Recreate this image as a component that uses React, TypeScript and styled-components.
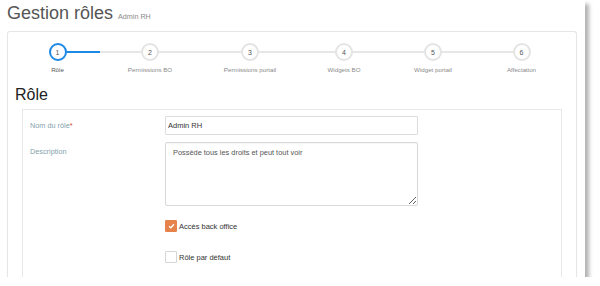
import React from "react";
import styled, { createGlobalStyle, css } from "styled-components";

const GlobalStyle = createGlobalStyle`
  html, body {
    margin: 0;
    padding: 0;
    background: #ffffff;
  }
  body {
    font-family: "Liberation Sans", Arial, sans-serif;
  }
`;

const Window = styled.div`
  width: 585px;
  height: 277px;
  overflow: hidden;
  background: #ffffff;
  box-shadow: 4px 4px 4px rgba(0, 0, 0, 0.3);
`;

const Header = styled.header`
  display: flex;
  align-items: baseline;
  gap: 5px;
  padding: 3px 7px 0;
`;

const Title = styled.h1`
  margin: 0;
  font-size: 18px;
  line-height: 20px;
  font-weight: normal;
  color: #555555;
`;

const SubTitle = styled.small`
  font-size: 7.2px;
  color: #8a8a8a;
`;

const Panel = styled.section`
  margin: 8px 8px 0 7px;
  padding: 11px 7px 0;
  border: 1px solid #e6e6e6;
  border-bottom: none;
  border-radius: 3px 3px 0 0;
  height: 300px;
`;

const Stepper = styled.ol`
  display: grid;
  grid-template-columns: 85fr 100fr 100fr 88fr 90fr 87fr;
  width: 550px;
  margin: 0;
  padding: 0;
  list-style: none;
`;

const Step = styled.li<{ $first?: boolean; $last?: boolean; $done?: boolean }>`
  position: relative;
  display: flex;
  flex-direction: column;
  align-items: center;

  &::before,
  &::after {
    content: "";
    position: absolute;
    top: 8px;
    height: 2px;
    width: 50%;
    background: #e6e6e6;
  }
  &::before {
    left: 0;
    ${(p) => p.$first && css`display: none;`}
  }
  &::after {
    right: 0;
    ${(p) => p.$done && css`background: #1e88e5;`}
    ${(p) => p.$last && css`display: none;`}
  }
`;

const Bubble = styled.span<{ $active?: boolean }>`
  position: relative;
  z-index: 1;
  box-sizing: border-box;
  width: 18px;
  height: 18px;
  border-radius: 50%;
  border: 2.5px solid ${(p) => (p.$active ? "#1e88e5" : "#e4e4e4")};
  background: #ffffff;
  display: flex;
  align-items: center;
  justify-content: center;
  font-size: 7px;
  color: #555555;
`;

const StepLabel = styled.span<{ $active?: boolean }>`
  margin-top: 5px;
  font-size: 6.2px;
  line-height: 8px;
  color: ${(p) => (p.$active ? "#555555" : "#8a8a8a")};
  white-space: nowrap;
`;

const SectionTitle = styled.h2`
  margin: 11px 0 4px;
  font-size: 16px;
  line-height: 20px;
  font-weight: normal;
  color: #222222;
`;

const FormBox = styled.div`
  margin: 0 7px;
  padding: 6px 7px 20px;
  border: 1px solid #e8e8e8;
  border-bottom: none;
`;

const Row = styled.div<{ $space?: number }>`
  display: grid;
  grid-template-columns: 135px 253px;
  align-items: start;
  margin-top: ${(p) => p.$space ?? 0}px;
`;

const FieldLabel = styled.label`
  font-size: 7.3px;
  line-height: 19px;
  color: #84a1ad;

  em {
    font-style: normal;
    color: #e0463c;
  }
`;

const TextInput = styled.input`
  box-sizing: border-box;
  width: 253px;
  height: 19px;
  margin: 0;
  padding: 0 2px;
  border: 1px solid #dddddd;
  border-radius: 1px;
  font-family: inherit;
  font-size: 7.5px;
  color: #333333;
  outline: none;
`;

const TextArea = styled.textarea`
  box-sizing: border-box;
  width: 253px;
  height: 64px;
  margin: 0;
  padding: 5px 7px;
  border: 1px solid #d9d9d9;
  border-radius: 2px;
  box-shadow: inset 0 1px 1px rgba(0, 0, 0, 0.04);
  font-family: inherit;
  font-size: 7.4px;
  color: #555555;
  outline: none;
  display: block;
`;

const Check = styled.label`
  grid-column: 2;
  display: flex;
  align-items: center;
  gap: 2px;
  font-size: 7.5px;
  color: #333333;
`;

const Box = styled.span<{ $checked?: boolean }>`
  box-sizing: border-box;
  width: 12px;
  height: 12px;
  border-radius: 1px;
  display: flex;
  align-items: center;
  justify-content: center;
  background: ${(p) => (p.$checked ? "#e5834a" : "#ffffff")};
  border: 1px solid ${(p) => (p.$checked ? "#e5834a" : "#d6d6d6")};
`;

const steps = [
  "Rôle",
  "Permissions BO",
  "Permissions portail",
  "Widgets BO",
  "Widget portail",
  "Affectation",
];

function CheckBox({ checked, label }: { checked?: boolean; label: string }) {
  return (
    <Check>
      <Box $checked={checked}>
        {checked && (
          <svg width="7" height="6" viewBox="0 0 7 6">
            <path d="M1 3.2 L2.8 4.8 L6 1.2" fill="none" stroke="#fff" strokeWidth="1.3" />
          </svg>
        )}
      </Box>
      {label}
    </Check>
  );
}

export default function App() {
  return (
    <>
      <GlobalStyle />
      <Window>
        <Header>
          <Title>Gestion rôles</Title>
          <SubTitle>Admin RH</SubTitle>
        </Header>
        <Panel>
          <Stepper>
            {steps.map((s, i) => (
              <Step key={s} $first={i === 0} $last={i === steps.length - 1} $done={i === 0}>
                <Bubble $active={i === 0}>{i + 1}</Bubble>
                <StepLabel $active={i === 0}>{s}</StepLabel>
              </Step>
            ))}
          </Stepper>
          <SectionTitle>Rôle</SectionTitle>
          <FormBox>
            <Row>
              <FieldLabel>
                Nom du rôle<em>*</em>
              </FieldLabel>
              <TextInput readOnly defaultValue="Admin RH" />
            </Row>
            <Row $space={7}>
              <FieldLabel>Description</FieldLabel>
              <TextArea readOnly defaultValue="Possède tous les droits et peut tout voir" />
            </Row>
            <Row $space={14}>
              <CheckBox checked label="Accès back office" />
            </Row>
            <Row $space={19}>
              <CheckBox label="Rôle par défaut" />
            </Row>
          </FormBox>
        </Panel>
      </Window>
    </>
  );
}
